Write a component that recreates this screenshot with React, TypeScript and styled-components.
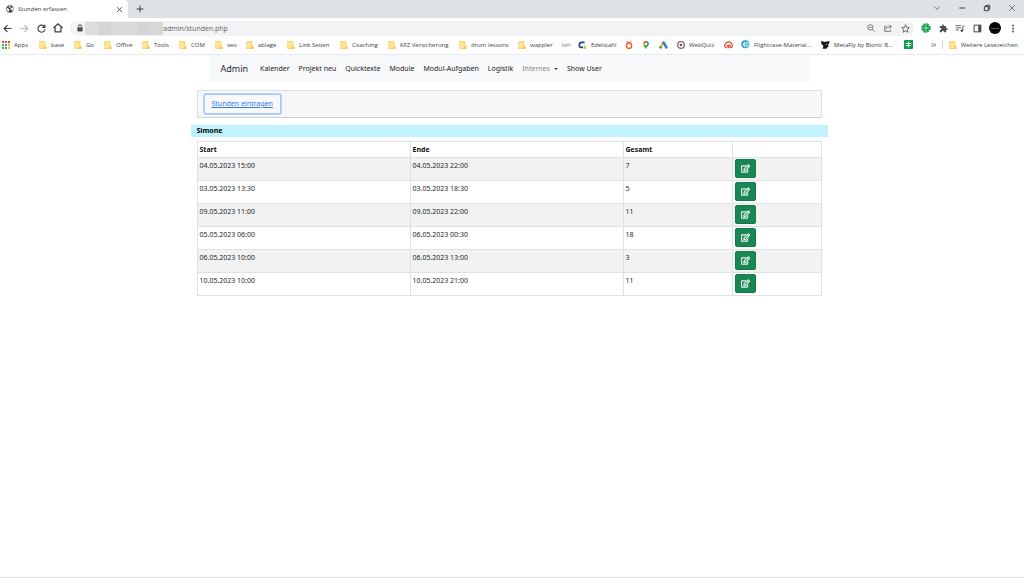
import React from 'react';
import styled, { createGlobalStyle, css } from 'styled-components';
import { FaRegEdit } from 'react-icons/fa';

const GlobalStyle = createGlobalStyle`
  *, *::before, *::after { box-sizing: border-box; }
  body {
    margin: 0;
    background: #fff;
    color: #212529;
    font: 7px/12px "Noto Sans", "Open Sans", sans-serif;
  }
  button, input { font: inherit; color: inherit; }
  a { color: inherit; text-decoration: none; }
  svg { display: block; flex: none; }
`;

const Window = styled.div`
  min-height: 100vh;
  display: flex;
  flex-direction: column;
  border-bottom: 1px solid #e0e0e0;
`;

/* ---------- Browser frame ---------- */

const BrowserFrame = styled.header`
  font-family: "Open Sans", "Noto Sans", sans-serif;
`;

const TabStrip = styled.div`
  display: flex;
  align-items: center;
  height: 18px;
  background: #dee1e6;
  color: #3c4043;
`;

const Tab = styled.div`
  display: flex;
  align-items: center;
  gap: 4px;
  width: 128px;
  height: 18px;
  padding: 0 5px 0 6px;
  background: #fff;
  border-top-right-radius: 4px;
  font-size: 6px;
`;

const TabTitle = styled.span`
  flex: 1;
  white-space: nowrap;
`;

const IconButton = styled.button<{ $size?: number }>`
  display: flex;
  align-items: center;
  justify-content: center;
  flex: none;
  width: ${({ $size = 10 }) => $size}px;
  height: ${({ $size = 10 }) => $size}px;
  padding: 0;
  border: 0;
  background: none;
  color: #3c4043;
`;

const NewTab = styled.div`
  margin-left: 7px;
`;

const WindowControls = styled.div`
  display: flex;
  gap: 15px;
  margin-left: auto;
  padding: 0 7px 3px 0;
`;

const Toolbar = styled.div`
  display: flex;
  align-items: center;
  height: 20px;
  padding: 0 6px 0 2px;
`;

const NavButtons = styled.div`
  display: flex;
  gap: 7px;
  margin-right: 7px;
`;

const AddressBar = styled.div`
  display: flex;
  align-items: center;
  flex: 1;
  height: 15px;
  padding: 0 4px 0 5px;
  border-radius: 8px;
  background: #f1f3f4;
`;

const HiddenHost = styled.span`
  flex: none;
  width: 78px;
  height: 13px;
  margin-left: 1px;
  background: linear-gradient(
    90deg,
    #dcdddf 0 13px, #d3d4d6 13px 26px, #d8d9db 26px 39px,
    #dadbdd 39px 52px, #d3d4d6 52px 65px, #d6d7d9 65px
  );
`;

const AddressInput = styled.input`
  flex: 1;
  min-width: 0;
  height: 14px;
  padding: 0;
  border: 0;
  outline: 0;
  background: none;
  color: #606468;
`;

const AddressActions = styled.div`
  display: flex;
  gap: 7px;
`;

const Extensions = styled.div`
  display: flex;
  align-items: center;
  gap: 7px;
  margin-left: 7px;
`;

const Avatar = styled.span`
  display: flex;
  align-items: center;
  justify-content: center;
  width: 12px;
  height: 12px;
  border-radius: 50%;
  background: #050505;
  &::after {
    content: "";
    width: 8px;
    height: 1px;
    background: #555;
  }
`;

const BookmarkBar = styled.nav`
  display: flex;
  align-items: center;
  height: 17px;
  padding: 0 6px 3px 2px;
  border-bottom: 1px solid #e9eaec;
  color: #3c4043;
  font-size: 6px;
`;

const Bookmark = styled.a<{ $width?: number }>`
  display: flex;
  align-items: center;
  gap: 4px;
  flex: none;
  ${({ $width }) => $width && css`width: ${$width}px;`}
  white-space: nowrap;
`;

const MoreBookmarks = styled.div`
  display: flex;
  align-items: center;
  gap: 6px;
  margin-left: auto;
`;

const Separator = styled.span`
  width: 1px;
  height: 9px;
  margin-left: -2px;
  background: #d5d7da;
`;

/* ---------- Page ---------- */

const Page = styled.main`
  width: 100%;
  padding-right: 6px;
`;

const Container = styled.div`
  width: 100%;
  max-width: 637px;
  margin: 0 auto;
`;

const Navbar = styled.nav`
  display: flex;
  align-items: center;
  gap: 9px;
  height: 27px;
  margin: 0 17px 0 18px;
  padding: 0 12px;
  background: #f8f9fa;
  white-space: nowrap;
`;

const Brand = styled.a`
  margin-right: 3px;
  font-size: 9px;
`;

const MenuButton = styled.button`
  display: flex;
  align-items: center;
  gap: 4px;
  padding: 0;
  border: 0;
  background: none;
  color: #85888b;
  &::after {
    content: "";
    border: 2px solid transparent;
    border-top-color: #444;
    border-bottom: 0;
  }
`;

const ActionBar = styled.div`
  margin: 8px 6px 7px;
  padding: 3px 6px;
  border: 1px solid #dcdddf;
  border-bottom-color: #cfd0d1;
  border-radius: 1px;
  background: #f7f7f7;
`;

const ActionLink = styled.a`
  display: inline-block;
  height: 20px;
  padding: 3px 7px;
  border: 1px solid #a6cafd;
  border-radius: 2px;
  box-shadow: 0 0 0 1px #b4d2fd;
  background: #f9f9f9;
  color: #2b7bf5;
  line-height: 12px;
  text-decoration: underline;
  vertical-align: top;
`;

const PersonHeading = styled.h2`
  margin: 0 0 4px;
  padding: 0 6px;
  background: #c0f3fd;
  font-size: 7px;
  line-height: 12px;
  color: #000;
`;

const TableArea = styled.div`
  padding: 0 6px;
`;

const HoursTable = styled.table`
  width: 100%;
  table-layout: fixed;
  border-collapse: collapse;
  th, td {
    padding: 2px 2px 1px;
    border: 1px solid #dee2e6;
    text-align: left;
    vertical-align: top;
  }
  td:last-child { padding: 1px 2px 2px; }
  th { color: #111; }
  tbody tr:nth-child(odd) { background: #f2f2f2; }
`;

const Column = styled.col<{ $width?: string }>`
  width: ${({ $width = 'auto' }) => $width};
`;

const EditButton = styled.button`
  display: flex;
  align-items: center;
  justify-content: center;
  width: 21px;
  height: 19px;
  padding: 0;
  border: 1px solid #147a48;
  border-radius: 2px;
  background: #198754;
  color: #fff;
  svg { stroke: #fff; stroke-width: 20px; }
`;

/* ---------- Icons ---------- */

type LineProps = { d: string; size?: number; width?: number; color?: string };
const Line = ({ d, size = 8, width = 2, color = 'currentColor' }: LineProps) => (
  <svg width={size} height={size} viewBox="0 0 24 24" fill="none" stroke={color} strokeWidth={width} aria-hidden="true">
    <path d={d} />
  </svg>
);

const Globe = () => (
  <svg width="8" height="8" viewBox="0 0 24 24" aria-hidden="true">
    <circle cx="12" cy="12" r="11" fill="#45494d" />
    <path d="M3 9l6 3 1 4-3 4C3 18 2 13 3 9zM10 2l-2 4 5 3 1-4zM15 9l6-2c2 5 1 9-3 12l-1-5-4-2z" fill="#fff" />
  </svg>
);

const Lock = () => (
  <svg width="6" height="8" viewBox="0 0 16 20" aria-hidden="true">
    <path d="M4 8V5a4 4 0 018 0v3" fill="none" stroke="#4c5054" strokeWidth="2.4" />
    <rect x="1" y="8" width="14" height="11" rx="1.5" fill="#4c5054" />
  </svg>
);

const Folder = () => (
  <svg width="8" height="8" viewBox="0 0 24 24" aria-hidden="true">
    <path d="M1 0h18v16h3v8H1z" fill="#f3cf62" />
    <path d="M3 2h14v20H3z" fill="#ffe492" />
    <path d="M17 16h5v8h-6z" fill="#f6c64d" />
  </svg>
);

const AppsGrid = () => {
  const colors = ['#ea4335', '#ea4335', '#ea4335', '#34a853', '#4285f4', '#fbbc05', '#34a853', '#34a853', '#fbbc05'];
  return (
    <svg width="8" height="8" viewBox="0 0 24 24" aria-hidden="true">
      {colors.map((fill, i) => (
        <rect key={i} x={(i % 3) * 9} y={Math.floor(i / 3) * 9} width="6" height="6" fill={fill} />
      ))}
    </svg>
  );
};

const SamMark = () => (
  <svg width="10" height="8" viewBox="0 0 30 24" fill="none" stroke="#a5a7aa" strokeWidth="2" aria-hidden="true">
    <path d="M8 9H3v3h5v4H2M11 9h6v7h-6v-4h6M20 16V9h8v7M24 9v7" />
  </svg>
);

const EdelstahlMark = () => (
  <svg width="9" height="8" viewBox="0 0 27 24" aria-hidden="true">
    <path d="M20 4H10Q4 4 4 12t6 7h5" fill="none" stroke="#174b8f" strokeWidth="5" />
    <path d="M16 17h8v6h-7z" fill="#a9c91b" />
    <path d="M18 13h3v4h-3z" fill="#f4c51c" />
  </svg>
);

const OrangeRing = () => (
  <svg width="8" height="8" viewBox="0 0 24 24" fill="none" stroke="#f4592b" aria-hidden="true">
    <circle cx="12" cy="14" r="8" strokeWidth="4" />
    <path d="M5 1l7 4 7-4" strokeWidth="3" />
  </svg>
);

const MapPin = () => (
  <svg width="8" height="8" viewBox="0 0 24 24" aria-hidden="true">
    <path d="M12 24C11 17 3 15 3 9h9z" fill="#34a853" />
    <path d="M12 24c1-7 9-9 9-15h-9l-7 6z" fill="#34a853" />
    <path d="M3 9a9 9 0 016-8l4 8-8 6Q3 12 3 9z" fill="#fbbc04" />
    <path d="M4 5a9 9 0 018-5v9z" fill="#ea4335" />
    <path d="M12 0a9 9 0 019 9h-9z" fill="#4285f4" />
    <circle cx="12" cy="9" r="3.5" fill="#fff" />
  </svg>
);

const AdsMark = () => (
  <svg width="9" height="8" viewBox="0 0 27 24" strokeLinecap="round" aria-hidden="true">
    <path d="M12 5L5 19" stroke="#fbbc04" strokeWidth="7" />
    <path d="M14 5l8 14" stroke="#2f7cf6" strokeWidth="8" />
    <circle cx="5" cy="19" r="4" fill="#34a853" />
  </svg>
);

const QuizMark = () => (
  <svg width="8" height="8" viewBox="0 0 24 24" aria-hidden="true">
    <circle cx="12" cy="12" r="10" fill="#fff" stroke="#77707c" strokeWidth="4" />
    <circle cx="12" cy="12" r="4" fill="#b3334c" />
  </svg>
);

const RedArcs = () => (
  <svg width="9" height="8" viewBox="0 0 27 24" fill="none" stroke="#e4432f" strokeWidth="3.4" aria-hidden="true">
    <path d="M5 21a11 11 0 1117 0M9 22v-8a3 3 0 015 0v8M14 12h2a3 3 0 013 3v6" />
  </svg>
);

const CaseMark = () => (
  <svg width="9" height="9" viewBox="0 0 27 27" aria-hidden="true">
    <circle cx="13" cy="13" r="12" fill="#1e9bc2" />
    <path d="M11 5v17M7 8v11M15 7h6v12h-6z" fill="none" stroke="#fff" strokeWidth="2.4" />
  </svg>
);

const FlyMark = () => (
  <svg width="9" height="9" viewBox="0 0 27 27" aria-hidden="true">
    <path d="M1 2l9 4 15-3v7l-4 4 2 4-7 8H5l2-9-6-5z" fill="#181818" />
    <path d="M13 14l7-4-4 6z" fill="#bbb" />
  </svg>
);

const SheetMark = () => (
  <svg width="9" height="9" viewBox="0 0 27 27" aria-hidden="true">
    <rect width="27" height="27" rx="2" fill="#0f9d46" />
    <path d="M5 10.500h17M13.500 5v17M6 16.500h15" stroke="#fff" strokeWidth="3" />
  </svg>
);

const GreenExtension = () => (
  <svg width="10" height="10" viewBox="0 0 27 27" aria-hidden="true">
    <circle cx="13.5" cy="13.5" r="10.5" fill="none" stroke="#16a34a" strokeWidth="5" strokeDasharray="6 2.25" />
    <circle cx="13.5" cy="13.5" r="9" fill="#159947" />
    <path d="M13.500 6v15M6 13.500h15" stroke="#d5f3df" strokeWidth="2" />
  </svg>
);

const Puzzle = () => (
  <svg width="9" height="9" viewBox="0 0 24 24" fill="#4d5156" aria-hidden="true">
    <path d="M20.500 11H19V7a2 2 0 00-2-2h-4V3.500a2.500 2.500 0 00-5 0V5H4a2 2 0 00-2 2v3.800h1.500a2.700 2.700 0 010 5.400H2V20a2 2 0 002 2h3.800v-1.500a2.700 2.700 0 015.400 0V22H17a2 2 0 002-2v-4h1.500a2.500 2.500 0 000-5z" />
  </svg>
);

const MusicQueue = () => (
  <svg width="10" height="9" viewBox="0 0 28 24" fill="none" stroke="currentColor" strokeWidth="2.2" aria-hidden="true">
    <path d="M2 4h15M2 10h15M2 16h9M22 18V5h5" />
    <circle cx="19" cy="18" r="2.5" fill="currentColor" />
  </svg>
);

const SidePanel = () => (
  <svg width="9" height="9" viewBox="0 0 24 24" aria-hidden="true">
    <rect x="3" y="3" width="18" height="18" fill="none" stroke="#44484c" strokeWidth="2.6" />
    <path d="M14 3h7v18h-7z" fill="#44484c" />
  </svg>
);

const Dots = () => (
  <svg width="4" height="9" viewBox="0 0 8 24" fill="#44484c" aria-hidden="true">
    <circle cx="4" cy="4" r="2.4" />
    <circle cx="4" cy="12" r="2.4" />
    <circle cx="4" cy="20" r="2.4" />
  </svg>
);

/* ---------- Data ---------- */

type BookmarkData = { label: string; name?: string; width: number; icon?: React.ReactNode };

const bookmarks: BookmarkData[] = [
  { label: 'Apps', width: 37, icon: <AppsGrid /> },
  { label: 'base', width: 35 },
  { label: 'Go', width: 30 },
  { label: 'Office', width: 38 },
  { label: 'Tools', width: 37 },
  { label: 'COM', width: 36 },
  { label: 'seo', width: 31 },
  { label: 'ablage', width: 41 },
  { label: 'Link Seiten', width: 53 },
  { label: 'Coaching', width: 48 },
  { label: 'KFZ Versicherung', width: 71 },
  { label: 'drum lessons', width: 59 },
  { label: 'wappler', width: 43 },
  { label: '', name: 'SAM', width: 17, icon: <SamMark /> },
  { label: 'Edelstahl', width: 47, icon: <EdelstahlMark /> },
  { label: '', name: 'Analyse', width: 17, icon: <OrangeRing /> },
  { label: '', name: 'Maps', width: 17, icon: <MapPin /> },
  { label: '', name: 'Ads', width: 18, icon: <AdsMark /> },
  { label: 'WebQuiz', width: 47, icon: <QuizMark /> },
  { label: '', name: 'Feed', width: 17, icon: <RedArcs /> },
  { label: 'Flightcase-Material...', width: 80, icon: <CaseMark /> },
  { label: 'MetaFly by Bionic B...', width: 83, icon: <FlyMark /> },
  { label: '', name: 'Tabellen', width: 9, icon: <SheetMark /> },
];

const entries = [
  ['04.05.2023 15:00', '04.05.2023 22:00', '7'],
  ['03.05.2023 13:30', '03.05.2023 18:30', '5'],
  ['09.05.2023 11:00', '09.05.2023 22:00', '11'],
  ['05.05.2023 06:00', '06.05.2023 00:30', '18'],
  ['06.05.2023 10:00', '06.05.2023 13:00', '3'],
  ['10.05.2023 10:00', '10.05.2023 21:00', '11'],
];

const menu = ['Kalender', 'Projekt neu', 'Quicktexte', 'Module', 'Modul-Aufgaben', 'Logistik'];

export default function App() {
  return (
    <Window>
      <GlobalStyle />
      <BrowserFrame>
        <TabStrip>
          <Tab>
            <Globe />
            <TabTitle>Stunden erfassen</TabTitle>
            <IconButton $size={8} aria-label="Tab schließen"><Line size={7} width={3} d="M4 4l16 16M20 4L4 20" /></IconButton>
          </Tab>
          <NewTab>
            <IconButton aria-label="Neuer Tab"><Line width={3} d="M12 2v20M2 12h20" /></IconButton>
          </NewTab>
          <WindowControls>
            <IconButton aria-label="Tabs suchen"><Line d="M4 8l8 8 8-8" /></IconButton>
            <IconButton aria-label="Minimieren"><Line width={3} d="M4 12h17" /></IconButton>
            <IconButton aria-label="Verkleinern"><Line width={3} d="M4 8h12v12H4zM8 8V4h12v12h-4" /></IconButton>
            <IconButton aria-label="Schließen"><Line d="M3 3l18 18M21 3L3 21" /></IconButton>
          </WindowControls>
        </TabStrip>
        <Toolbar>
          <NavButtons>
            <IconButton aria-label="Zurück"><Line size={9} width={3} d="M23 12H3M12 3l-9 9 9 9" /></IconButton>
            <IconButton aria-label="Vorwärts"><Line size={9} width={3} color="#b5b7b9" d="M1 12h20M12 3l9 9-9 9" /></IconButton>
            <IconButton aria-label="Neu laden"><Line size={9} width={3} d="M20 7a9.500 9.500 0 101.500 7M21 2v7h-7" /></IconButton>
            <IconButton aria-label="Startseite"><Line size={10} width={3} d="M1 12L12 2l11 10M5 10v11h14V10" /></IconButton>
          </NavButtons>
          <AddressBar>
            <IconButton $size={9} aria-label="Websiteinformationen"><Lock /></IconButton>
            <HiddenHost />
            <AddressInput aria-label="Adresse" defaultValue="admin/stunden.php" />
            <AddressActions>
              <IconButton aria-label="Zoom"><Line d="M10 2a8 8 0 100 16 8 8 0 000-16zM16 16l7 7M6 10h8" /></IconButton>
              <IconButton aria-label="Teilen"><Line d="M8 7H2v15h18v-5M7 16c0-6 4-8 14-8M16 2l6 6-6 6" /></IconButton>
              <IconButton aria-label="Lesezeichen"><Line size={9} d="M12 2l3 7 7 1-5 5 1 7-6-4-6 4 1-7-5-5 7-1z" /></IconButton>
            </AddressActions>
          </AddressBar>
          <Extensions>
            <IconButton aria-label="Erweiterung"><GreenExtension /></IconButton>
            <IconButton aria-label="Erweiterungen"><Puzzle /></IconButton>
            <IconButton aria-label="Mediensteuerung"><MusicQueue /></IconButton>
            <IconButton aria-label="Seitenleiste"><SidePanel /></IconButton>
            <IconButton $size={12} aria-label="Profil"><Avatar /></IconButton>
            <IconButton aria-label="Menü"><Dots /></IconButton>
          </Extensions>
        </Toolbar>
        <BookmarkBar aria-label="Lesezeichen">
          {bookmarks.map(({ label, name, width, icon }) => (
            <Bookmark key={label || name} href="#" $width={width} aria-label={label || name}>
              {icon ?? <Folder />}
              {label}
            </Bookmark>
          ))}
          <MoreBookmarks>
            <IconButton $size={8} aria-label="Weitere anzeigen"><Line size={6} width={3} d="M3 5l7 7-7 7M12 5l7 7-7 7" /></IconButton>
            <Separator />
            <Bookmark href="#"><Folder />Weitere Lesezeichen</Bookmark>
          </MoreBookmarks>
        </BookmarkBar>
      </BrowserFrame>
      <Page>
        <Container>
          <Navbar>
            <Brand href="#">Admin</Brand>
            {menu.map((item) => <a key={item} href="#">{item}</a>)}
            <MenuButton>Internes</MenuButton>
            <a href="#">Show User</a>
          </Navbar>
          <ActionBar>
            <ActionLink href="#">Stunden eintragen</ActionLink>
          </ActionBar>
          <PersonHeading>Simone</PersonHeading>
          <TableArea>
            <HoursTable>
              <colgroup>
                <Column $width="213px" />
                <Column $width="213px" />
                <Column />
                <Column $width="89px" />
              </colgroup>
              <thead>
                <tr><th>Start</th><th>Ende</th><th>Gesamt</th><th aria-label="Aktion" /></tr>
              </thead>
              <tbody>
                {entries.map(([start, end, total]) => (
                  <tr key={start}>
                    <td>{start}</td>
                    <td>{end}</td>
                    <td>{total}</td>
                    <td><EditButton aria-label="Bearbeiten"><FaRegEdit size={9} /></EditButton></td>
                  </tr>
                ))}
              </tbody>
            </HoursTable>
          </TableArea>
        </Container>
      </Page>
    </Window>
  );
}
